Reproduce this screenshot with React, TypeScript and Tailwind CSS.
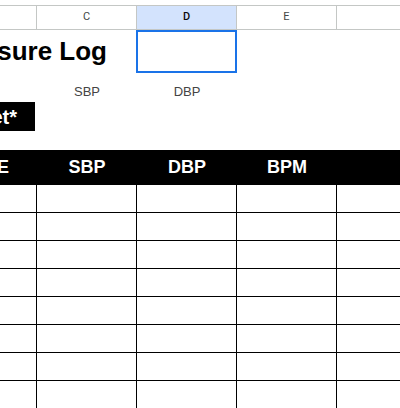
import React from 'react';

const COLS = ['C', 'D', 'E'];
const HEADERS = ['SBP', 'DBP', 'BPM'];
const ROWS = Array.from({ length: 9 }, (_, i) => i);

export default function App() {
  return (
    <div className="w-[400px] h-[408px] overflow-hidden bg-white font-['Liberation_Sans',Arial,sans-serif] text-black">
      <div className="h-[5px]" />

      {/* column letters */}
      <div className="flex h-[25px] border-y border-[#c4c7c5] text-[11px] font-['Roboto',Arial,sans-serif]">
        <div className="w-[37px] shrink-0 border-r border-[#c4c7c5]" />
        {COLS.map(c => (
          <div
            key={c}
            className={`w-[100px] shrink-0 border-r border-[#c4c7c5] flex items-center justify-center ${
              c === 'D' ? 'bg-[#d3e3fd] text-[#0b0b0b] font-medium' : 'text-[#444746]'
            }`}
          >
            {c}
          </div>
        ))}
        <div className="flex-1" />
      </div>

      {/* title row */}
      <div className="flex h-[43px]">
        <div className="w-[136px] shrink-0">
          <div className="w-[107px] overflow-hidden flex justify-end pt-[6px]">
            <span className="whitespace-nowrap text-[26px] leading-[30px] font-bold">Blood Pressure Log</span>
          </div>
        </div>
        <div className="w-[101px] shrink-0 border-2 border-[#1a73e8]" />
      </div>

      {/* sub labels */}
      <div className="flex h-[29px] text-[13px] leading-[16px] text-[#444]">
        <div className="w-[37px] shrink-0" />
        <div className="w-[100px] shrink-0 flex items-end justify-center pb-[2px]">SBP</div>
        <div className="w-[100px] shrink-0 flex items-end justify-center pb-[2px]">DBP</div>
      </div>

      {/* black label */}
      <div className="flex h-[29px]">
        <div className="w-[35px] bg-black overflow-hidden flex justify-end items-center pr-[18px]">
          <span className="whitespace-nowrap text-white font-bold text-[20px] leading-[24px]">Target*</span>
        </div>
      </div>

      <div className="h-[19px]" />

      {/* table header */}
      <div className="flex h-[35px] bg-black text-white font-bold text-[18px]">
        <div className="w-[37px] shrink-0 overflow-hidden flex justify-end items-center pr-[28px]">
          <span className="whitespace-nowrap">DATE</span>
        </div>
        {HEADERS.map(h => (
          <div key={h} className="w-[100px] shrink-0 flex items-center justify-center">
            {h}
          </div>
        ))}
        <div className="flex-1" />
      </div>

      {/* body */}
      {ROWS.map(r => (
        <div key={r} className="flex h-[28px] border-b border-black">
          <div className="w-[37px] shrink-0 border-r border-black" />
          <div className="w-[100px] shrink-0 border-r border-black" />
          <div className="w-[100px] shrink-0 border-r border-black" />
          <div className="w-[100px] shrink-0 border-r border-black" />
          <div className="flex-1" />
        </div>
      ))}
    </div>
  );
}
